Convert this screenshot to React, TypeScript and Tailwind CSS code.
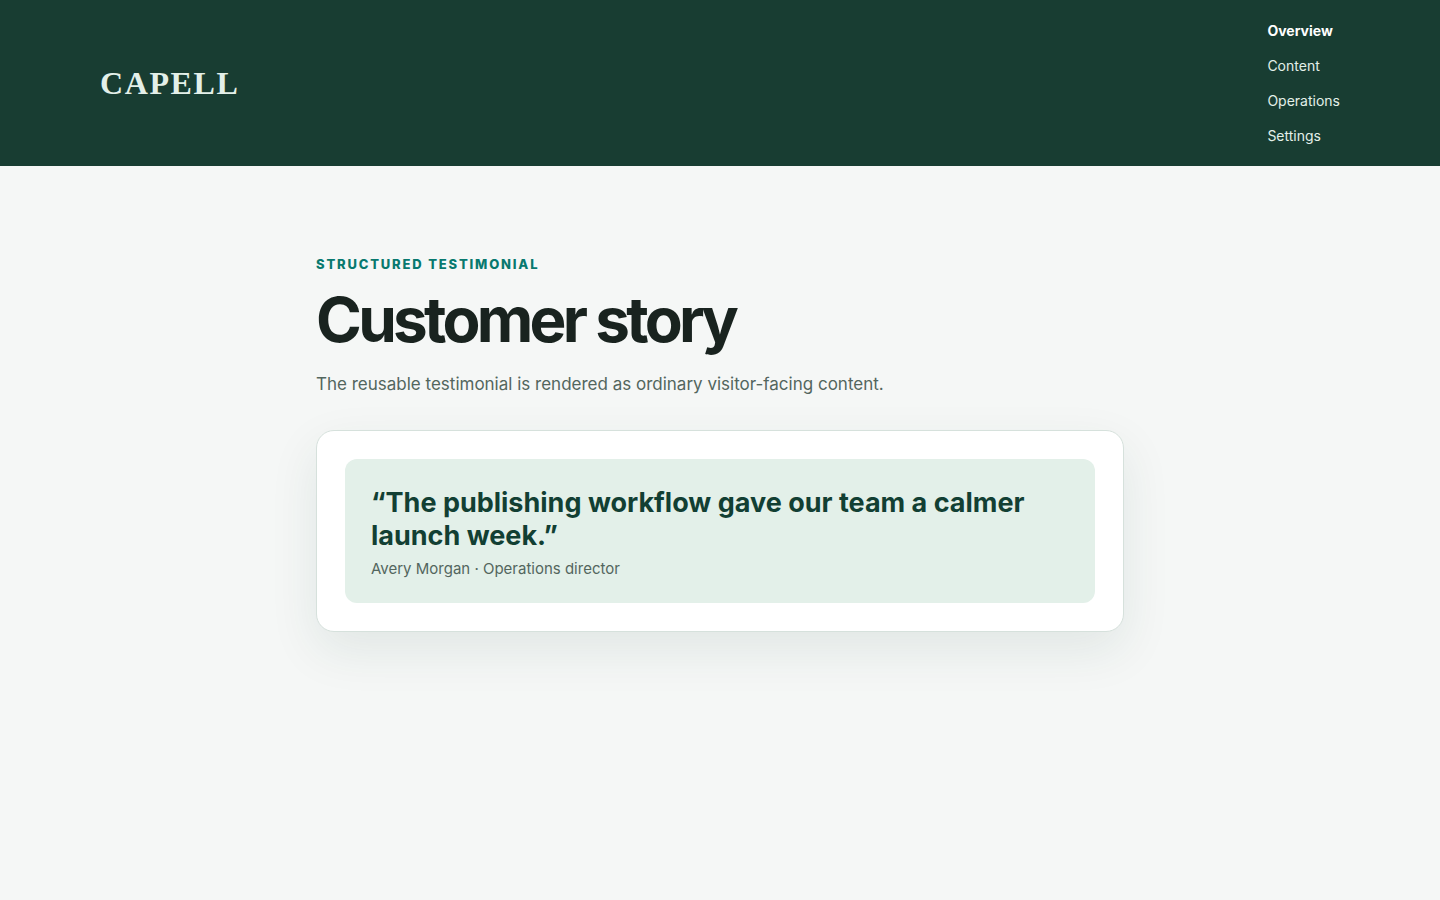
import React from "react";

interface INavItem {
  label: string;
  href: string;
  active?: boolean;
}

const navItems: INavItem[] = [
  { label: "Overview", href: "#overview", active: true },
  { label: "Content", href: "#content" },
  { label: "Operations", href: "#operations" },
  { label: "Settings", href: "#settings" },
];

const Header: React.FC = () => {
  return (
    <header className="bg-[#183d32]">
      <div className="mx-auto flex max-w-[1240px] items-center justify-between py-[19px]">
        <a
          href="#home"
          className="font-['Liberation_Serif',serif] text-[32px] leading-10 font-bold tracking-wider text-[#e3f0e9]"
        >
          CAPELL
        </a>
        <nav aria-label="Main">
          <ul className="flex flex-col gap-3 text-sm leading-[23px] text-[#e3f0e9]">
            {navItems.map((item) => (
              <li key={item.label}>
                <a
                  href={item.href}
                  aria-current={item.active ? "page" : undefined}
                  className={item.active ? "font-bold text-white" : ""}
                >
                  {item.label}
                </a>
              </li>
            ))}
          </ul>
        </nav>
      </div>
    </header>
  );
};

interface ITestimonial {
  quote: string;
  name: string;
  role: string;
}

const Testimonial: React.FC<ITestimonial> = ({ quote, name, role }) => {
  return (
    <section className="mt-8 rounded-[18px] border border-[#d6e1dc] bg-white p-7 shadow-[0_18px_50px_rgba(25,61,51,0.09)]">
      <figure className="rounded-xl bg-[#e3f0e9] px-[26px] pt-[27px] pb-6">
        <blockquote className="text-[27px] leading-[33px] font-bold text-[#123f33]">
          {`“${quote}”`}
        </blockquote>
        <figcaption className="mt-[7px] text-[15px] leading-5 text-[#53665e]">
          {`${name} · ${role}`}
        </figcaption>
      </figure>
    </section>
  );
};

const App: React.FC = () => {
  return (
    <div className="min-h-screen bg-[#f5f7f6] font-['Inter',sans-serif] text-[#19231f]">
      <Header />
      <main className="mx-auto max-w-[808px] pt-[88px] pb-20">
        <p className="text-[13px] leading-5 font-extrabold tracking-[0.14em] text-[#08796f] uppercase">
          Structured testimonial
        </p>
        <h1 className="mt-3 text-[62px] leading-[68px] font-bold tracking-[-0.06em]">
          Customer story
        </h1>
        <p className="mt-4 text-[17px] leading-7 text-[#53665e]">
          The reusable testimonial is rendered as ordinary visitor-facing
          content.
        </p>
        <Testimonial
          quote="The publishing workflow gave our team a calmer launch week."
          name="Avery Morgan"
          role="Operations director"
        />
      </main>
    </div>
  );
};

export default App;
